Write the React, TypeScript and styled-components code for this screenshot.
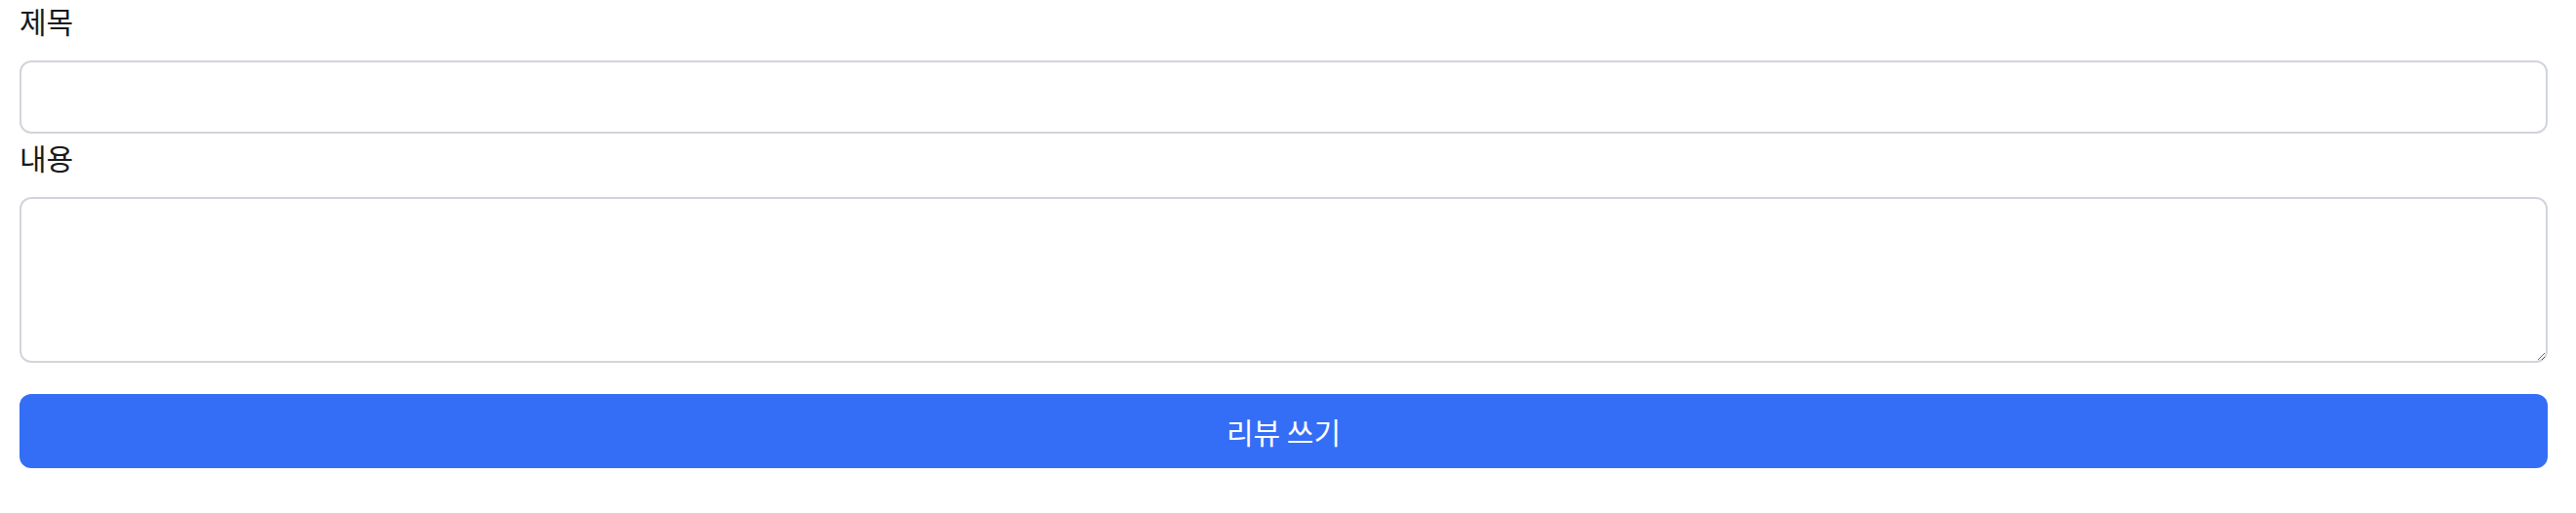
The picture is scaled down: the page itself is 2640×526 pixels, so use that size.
import styled, { createGlobalStyle } from "styled-components";

const GlobalStyle = createGlobalStyle`
  body {
    margin: 0;
    background: #ffffff;
    font-family: "Noto Sans CJK KR", "Noto Sans", sans-serif;
    color: #1a1a1a;
  }
`;

const Form = styled.form`
  display: flex;
  flex-direction: column;
  padding: 0 29px 0 20px;
`;

const Label = styled.label`
  display: block;
  font-size: 30px;
  line-height: 42px;
  margin-bottom: 20px;
`;

const Field = styled.input`
  box-sizing: border-box;
  width: 100%;
  height: 75px;
  margin: 0 0 3px;
  padding: 0 20px;
  border: 2px solid #d1d5db;
  border-radius: 12px;
  font-size: 28px;
  font-family: inherit;
  outline: none;
`;

const TextArea = styled.textarea`
  display: block;
  box-sizing: border-box;
  width: 100%;
  height: 170px;
  margin: 0 0 32px;
  padding: 16px 20px;
  border: 2px solid #d1d5db;
  border-radius: 12px;
  font-size: 28px;
  font-family: inherit;
  outline: none;
`;

const Submit = styled.button`
  width: 100%;
  height: 76px;
  border: none;
  border-radius: 12px;
  background: #346ef6;
  color: #ffffff;
  font-size: 30px;
  font-family: inherit;
  cursor: pointer;
`;

const ReviewForm = () => {
  return (
    <>
      <GlobalStyle />
      <Form onSubmit={(e) => e.preventDefault()}>
        <Label htmlFor="title">제목</Label>
        <Field id="title" type="text" />
        <Label htmlFor="content">내용</Label>
        <TextArea id="content" />
        <Submit type="submit">리뷰 쓰기</Submit>
      </Form>
    </>
  );
};

export default ReviewForm;
